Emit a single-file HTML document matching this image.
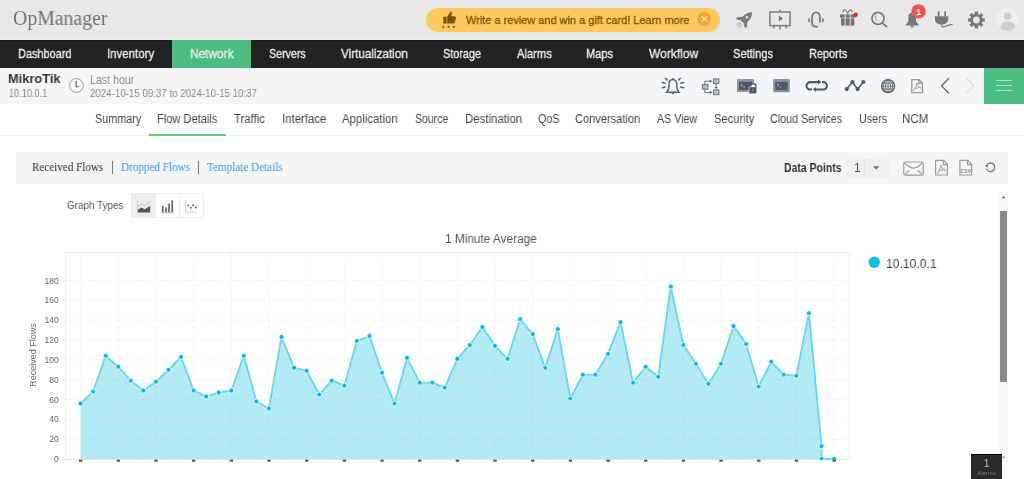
<!DOCTYPE html>
<html><head><meta charset="utf-8">
<style>
html,body{margin:0;padding:0;width:1024px;height:479px;overflow:hidden;background:#fff;font-family:"Liberation Sans",sans-serif;}
.t{position:absolute;white-space:nowrap;transform-origin:0 50%;will-change:transform;}
.b{position:absolute;}
svg{overflow:visible}
</style></head><body>
<!-- header -->
<div class=b style="left:0;top:0;width:1024px;height:40px;background:#e7e8e9"></div>
<div class=b style="left:0;top:38px;width:1024px;height:2px;background:#ebebec"></div>
<div class=b style="left:425.7px;top:8px;width:294.2px;height:24px;border-radius:12px;background:#fdc95f"></div>
<div class=b style="left:697.3px;top:12px;width:14px;height:14px;border-radius:7px;background:#e9a92c"></div>
<!-- nav -->
<div class=b style="left:0;top:40px;width:1024px;height:28px;background:#232323;border-top:1px solid #1c1c1c;box-sizing:border-box"></div>
<div class=b style="left:172.3px;top:40px;width:78.8px;height:28px;background:#4cbd7f"></div>
<!-- sub header -->
<div class=b style="left:0;top:68px;width:1024px;height:36px;background:#f4f5f7"></div>
<div class=b style="left:984px;top:68px;width:40px;height:35.5px;background:#4cbe7f"></div>
<div class=b style="left:996px;top:80.4px;width:16px;height:1px;background:#b0e3c6"></div>
<div class=b style="left:996px;top:85.2px;width:16px;height:1px;background:#b0e3c6"></div>
<div class=b style="left:996px;top:89.9px;width:16px;height:1px;background:#b0e3c6"></div>
<!-- tabs -->
<div class=b style="left:0;top:135px;width:1024px;height:1px;background:#efefef"></div>
<div class=b style="left:149.3px;top:134px;width:76.8px;height:2px;background:#5ccf7c"></div>
<!-- received flows bar -->
<div class=b style="left:16px;top:152px;width:992px;height:32px;background:#f4f5f7"></div>
<div class=b style="left:112px;top:161px;width:1px;height:13px;background:#777"></div>
<div class=b style="left:198px;top:161px;width:1px;height:13px;background:#777"></div>
<div class=b style="left:846px;top:158.5px;width:42.5px;height:19px;background:#eeeff0;border:0;"></div>
<div class=b style="left:864px;top:158.5px;width:1px;height:19px;background:#e2e3e4"></div>
<!-- graph types -->
<div class=b style="left:131px;top:193.4px;width:72.5px;height:24.8px;border:1px solid #efefef;box-sizing:border-box"></div>
<div class=b style="left:131px;top:193.4px;width:25px;height:24.8px;background:#ececec"></div>
<div class=b style="left:179px;top:193.4px;width:1px;height:24.8px;background:#efefef"></div>
<!-- scrollbar -->
<div class=b style="left:999px;top:192px;width:9px;height:270px;background:#f9f9f9"></div>
<div class=b style="left:1000px;top:210.5px;width:7px;height:171px;background:#8a8a8a"></div>
<!-- alarms box -->
<div class=b style="left:971px;top:454px;width:31px;height:25px;background:#2a2a2a;border-top:1px solid #000;box-sizing:border-box"></div>
<div class=t style="left:971px;top:457px;width:31px;text-align:center;font-size:11px;line-height:12px;color:#bbb">1</div>
<div class=t style="left:971px;top:470px;width:31px;text-align:center;font-size:6px;line-height:7px;color:#777">Alarms</div>
<svg width="1024" height="479" style="position:absolute;left:0;top:0">
<rect x="65.5" y="252.5" width="783.5" height="206.5" fill="none" stroke="#efefef" stroke-width="1"/>
<text x="58.8" y="462.10" text-anchor="end" font-family="Liberation Sans, sans-serif" font-size="8.6" fill="#666">0</text>
<text x="58.8" y="442.27" text-anchor="end" font-family="Liberation Sans, sans-serif" font-size="8.6" fill="#666">20</text>
<text x="58.8" y="422.43" text-anchor="end" font-family="Liberation Sans, sans-serif" font-size="8.6" fill="#666">40</text>
<text x="58.8" y="402.60" text-anchor="end" font-family="Liberation Sans, sans-serif" font-size="8.6" fill="#666">60</text>
<text x="58.8" y="382.76" text-anchor="end" font-family="Liberation Sans, sans-serif" font-size="8.6" fill="#666">80</text>
<text x="58.8" y="362.93" text-anchor="end" font-family="Liberation Sans, sans-serif" font-size="8.6" fill="#666">100</text>
<text x="58.8" y="343.10" text-anchor="end" font-family="Liberation Sans, sans-serif" font-size="8.6" fill="#666">120</text>
<text x="58.8" y="323.26" text-anchor="end" font-family="Liberation Sans, sans-serif" font-size="8.6" fill="#666">140</text>
<text x="58.8" y="303.43" text-anchor="end" font-family="Liberation Sans, sans-serif" font-size="8.6" fill="#666">160</text>
<text x="58.8" y="283.59" text-anchor="end" font-family="Liberation Sans, sans-serif" font-size="8.6" fill="#666">180</text>
<polygon points="80.60,459.0 80.60,403.46 93.16,391.56 105.71,355.86 118.27,366.77 130.83,380.66 143.38,390.57 155.94,381.65 168.50,369.75 181.06,356.85 193.61,390.57 206.17,396.52 218.73,392.56 231.28,390.57 243.84,355.86 256.40,401.48 268.96,408.42 281.51,337.02 294.07,367.76 306.63,370.74 319.18,394.54 331.74,380.66 344.30,385.61 356.85,340.99 369.41,336.03 381.97,372.72 394.52,403.46 407.08,357.85 419.64,382.64 432.20,382.64 444.75,387.60 457.31,358.84 469.87,344.95 482.42,327.10 494.98,345.95 507.54,358.84 520.10,319.17 532.65,334.05 545.21,367.76 557.77,329.09 570.32,398.51 582.88,374.71 595.44,374.71 607.99,353.88 620.55,322.15 633.11,382.64 645.67,366.77 658.22,376.69 670.78,286.44 683.34,344.95 695.89,363.80 708.45,383.63 721.01,363.80 733.56,326.11 746.12,343.96 758.68,386.61 771.24,361.81 783.79,374.71 796.35,375.70 808.91,313.22 821.46,446.11 821.46,459.0" fill="#b3ebf5"/>
<line x1="63" x2="849" y1="459.00" y2="459.00" stroke="#999" stroke-opacity="0.1" stroke-width="1" stroke-dasharray="4,2"/>
<line x1="63" x2="849" y1="439.17" y2="439.17" stroke="#999" stroke-opacity="0.1" stroke-width="1" stroke-dasharray="4,2"/>
<line x1="63" x2="849" y1="419.33" y2="419.33" stroke="#999" stroke-opacity="0.1" stroke-width="1" stroke-dasharray="4,2"/>
<line x1="63" x2="849" y1="399.50" y2="399.50" stroke="#999" stroke-opacity="0.1" stroke-width="1" stroke-dasharray="4,2"/>
<line x1="63" x2="849" y1="379.66" y2="379.66" stroke="#999" stroke-opacity="0.1" stroke-width="1" stroke-dasharray="4,2"/>
<line x1="63" x2="849" y1="359.83" y2="359.83" stroke="#999" stroke-opacity="0.1" stroke-width="1" stroke-dasharray="4,2"/>
<line x1="63" x2="849" y1="340.00" y2="340.00" stroke="#999" stroke-opacity="0.1" stroke-width="1" stroke-dasharray="4,2"/>
<line x1="63" x2="849" y1="320.16" y2="320.16" stroke="#999" stroke-opacity="0.1" stroke-width="1" stroke-dasharray="4,2"/>
<line x1="63" x2="849" y1="300.33" y2="300.33" stroke="#999" stroke-opacity="0.1" stroke-width="1" stroke-dasharray="4,2"/>
<line x1="63" x2="849" y1="280.49" y2="280.49" stroke="#999" stroke-opacity="0.1" stroke-width="1" stroke-dasharray="4,2"/>
<line x1="80.60" x2="80.60" y1="252.5" y2="459" stroke="#999" stroke-opacity="0.1" stroke-width="1" stroke-dasharray="4,2"/>
<line x1="118.27" x2="118.27" y1="252.5" y2="459" stroke="#999" stroke-opacity="0.1" stroke-width="1" stroke-dasharray="4,2"/>
<line x1="155.94" x2="155.94" y1="252.5" y2="459" stroke="#999" stroke-opacity="0.1" stroke-width="1" stroke-dasharray="4,2"/>
<line x1="193.61" x2="193.61" y1="252.5" y2="459" stroke="#999" stroke-opacity="0.1" stroke-width="1" stroke-dasharray="4,2"/>
<line x1="231.28" x2="231.28" y1="252.5" y2="459" stroke="#999" stroke-opacity="0.1" stroke-width="1" stroke-dasharray="4,2"/>
<line x1="268.96" x2="268.96" y1="252.5" y2="459" stroke="#999" stroke-opacity="0.1" stroke-width="1" stroke-dasharray="4,2"/>
<line x1="306.63" x2="306.63" y1="252.5" y2="459" stroke="#999" stroke-opacity="0.1" stroke-width="1" stroke-dasharray="4,2"/>
<line x1="344.30" x2="344.30" y1="252.5" y2="459" stroke="#999" stroke-opacity="0.1" stroke-width="1" stroke-dasharray="4,2"/>
<line x1="381.97" x2="381.97" y1="252.5" y2="459" stroke="#999" stroke-opacity="0.1" stroke-width="1" stroke-dasharray="4,2"/>
<line x1="419.64" x2="419.64" y1="252.5" y2="459" stroke="#999" stroke-opacity="0.1" stroke-width="1" stroke-dasharray="4,2"/>
<line x1="457.31" x2="457.31" y1="252.5" y2="459" stroke="#999" stroke-opacity="0.1" stroke-width="1" stroke-dasharray="4,2"/>
<line x1="494.98" x2="494.98" y1="252.5" y2="459" stroke="#999" stroke-opacity="0.1" stroke-width="1" stroke-dasharray="4,2"/>
<line x1="532.65" x2="532.65" y1="252.5" y2="459" stroke="#999" stroke-opacity="0.1" stroke-width="1" stroke-dasharray="4,2"/>
<line x1="570.32" x2="570.32" y1="252.5" y2="459" stroke="#999" stroke-opacity="0.1" stroke-width="1" stroke-dasharray="4,2"/>
<line x1="607.99" x2="607.99" y1="252.5" y2="459" stroke="#999" stroke-opacity="0.1" stroke-width="1" stroke-dasharray="4,2"/>
<line x1="645.67" x2="645.67" y1="252.5" y2="459" stroke="#999" stroke-opacity="0.1" stroke-width="1" stroke-dasharray="4,2"/>
<line x1="683.34" x2="683.34" y1="252.5" y2="459" stroke="#999" stroke-opacity="0.1" stroke-width="1" stroke-dasharray="4,2"/>
<line x1="721.01" x2="721.01" y1="252.5" y2="459" stroke="#999" stroke-opacity="0.1" stroke-width="1" stroke-dasharray="4,2"/>
<line x1="758.68" x2="758.68" y1="252.5" y2="459" stroke="#999" stroke-opacity="0.1" stroke-width="1" stroke-dasharray="4,2"/>
<line x1="796.35" x2="796.35" y1="252.5" y2="459" stroke="#999" stroke-opacity="0.1" stroke-width="1" stroke-dasharray="4,2"/>
<line x1="834.02" x2="834.02" y1="252.5" y2="459" stroke="#999" stroke-opacity="0.1" stroke-width="1" stroke-dasharray="4,2"/>
<line x1="63" x2="849" y1="459.5" y2="459.5" stroke="#e6e6e6" stroke-width="1"/>
<polyline points="80.60,403.46 93.16,391.56 105.71,355.86 118.27,366.77 130.83,380.66 143.38,390.57 155.94,381.65 168.50,369.75 181.06,356.85 193.61,390.57 206.17,396.52 218.73,392.56 231.28,390.57 243.84,355.86 256.40,401.48 268.96,408.42 281.51,337.02 294.07,367.76 306.63,370.74 319.18,394.54 331.74,380.66 344.30,385.61 356.85,340.99 369.41,336.03 381.97,372.72 394.52,403.46 407.08,357.85 419.64,382.64 432.20,382.64 444.75,387.60 457.31,358.84 469.87,344.95 482.42,327.10 494.98,345.95 507.54,358.84 520.10,319.17 532.65,334.05 545.21,367.76 557.77,329.09 570.32,398.51 582.88,374.71 595.44,374.71 607.99,353.88 620.55,322.15 633.11,382.64 645.67,366.77 658.22,376.69 670.78,286.44 683.34,344.95 695.89,363.80 708.45,383.63 721.01,363.80 733.56,326.11 746.12,343.96 758.68,386.61 771.24,361.81 783.79,374.71 796.35,375.70 808.91,313.22 821.46,446.11 821.46,459.0 834.02,459.0" fill="none" stroke="#66d5ee" stroke-width="1.8" stroke-linejoin="round"/>
<clipPath id="pc"><rect x="60" y="240" width="800" height="219.8"/></clipPath><g clip-path="url(#pc)">
<circle cx="80.60" cy="403.46" r="2.5" fill="#00bde0" stroke="#fff" stroke-width="0.8"/>
<circle cx="93.16" cy="391.56" r="2.5" fill="#00bde0" stroke="#fff" stroke-width="0.8"/>
<circle cx="105.71" cy="355.86" r="2.5" fill="#00bde0" stroke="#fff" stroke-width="0.8"/>
<circle cx="118.27" cy="366.77" r="2.5" fill="#00bde0" stroke="#fff" stroke-width="0.8"/>
<circle cx="130.83" cy="380.66" r="2.5" fill="#00bde0" stroke="#fff" stroke-width="0.8"/>
<circle cx="143.38" cy="390.57" r="2.5" fill="#00bde0" stroke="#fff" stroke-width="0.8"/>
<circle cx="155.94" cy="381.65" r="2.5" fill="#00bde0" stroke="#fff" stroke-width="0.8"/>
<circle cx="168.50" cy="369.75" r="2.5" fill="#00bde0" stroke="#fff" stroke-width="0.8"/>
<circle cx="181.06" cy="356.85" r="2.5" fill="#00bde0" stroke="#fff" stroke-width="0.8"/>
<circle cx="193.61" cy="390.57" r="2.5" fill="#00bde0" stroke="#fff" stroke-width="0.8"/>
<circle cx="206.17" cy="396.52" r="2.5" fill="#00bde0" stroke="#fff" stroke-width="0.8"/>
<circle cx="218.73" cy="392.56" r="2.5" fill="#00bde0" stroke="#fff" stroke-width="0.8"/>
<circle cx="231.28" cy="390.57" r="2.5" fill="#00bde0" stroke="#fff" stroke-width="0.8"/>
<circle cx="243.84" cy="355.86" r="2.5" fill="#00bde0" stroke="#fff" stroke-width="0.8"/>
<circle cx="256.40" cy="401.48" r="2.5" fill="#00bde0" stroke="#fff" stroke-width="0.8"/>
<circle cx="268.96" cy="408.42" r="2.5" fill="#00bde0" stroke="#fff" stroke-width="0.8"/>
<circle cx="281.51" cy="337.02" r="2.5" fill="#00bde0" stroke="#fff" stroke-width="0.8"/>
<circle cx="294.07" cy="367.76" r="2.5" fill="#00bde0" stroke="#fff" stroke-width="0.8"/>
<circle cx="306.63" cy="370.74" r="2.5" fill="#00bde0" stroke="#fff" stroke-width="0.8"/>
<circle cx="319.18" cy="394.54" r="2.5" fill="#00bde0" stroke="#fff" stroke-width="0.8"/>
<circle cx="331.74" cy="380.66" r="2.5" fill="#00bde0" stroke="#fff" stroke-width="0.8"/>
<circle cx="344.30" cy="385.61" r="2.5" fill="#00bde0" stroke="#fff" stroke-width="0.8"/>
<circle cx="356.85" cy="340.99" r="2.5" fill="#00bde0" stroke="#fff" stroke-width="0.8"/>
<circle cx="369.41" cy="336.03" r="2.5" fill="#00bde0" stroke="#fff" stroke-width="0.8"/>
<circle cx="381.97" cy="372.72" r="2.5" fill="#00bde0" stroke="#fff" stroke-width="0.8"/>
<circle cx="394.52" cy="403.46" r="2.5" fill="#00bde0" stroke="#fff" stroke-width="0.8"/>
<circle cx="407.08" cy="357.85" r="2.5" fill="#00bde0" stroke="#fff" stroke-width="0.8"/>
<circle cx="419.64" cy="382.64" r="2.5" fill="#00bde0" stroke="#fff" stroke-width="0.8"/>
<circle cx="432.20" cy="382.64" r="2.5" fill="#00bde0" stroke="#fff" stroke-width="0.8"/>
<circle cx="444.75" cy="387.60" r="2.5" fill="#00bde0" stroke="#fff" stroke-width="0.8"/>
<circle cx="457.31" cy="358.84" r="2.5" fill="#00bde0" stroke="#fff" stroke-width="0.8"/>
<circle cx="469.87" cy="344.95" r="2.5" fill="#00bde0" stroke="#fff" stroke-width="0.8"/>
<circle cx="482.42" cy="327.10" r="2.5" fill="#00bde0" stroke="#fff" stroke-width="0.8"/>
<circle cx="494.98" cy="345.95" r="2.5" fill="#00bde0" stroke="#fff" stroke-width="0.8"/>
<circle cx="507.54" cy="358.84" r="2.5" fill="#00bde0" stroke="#fff" stroke-width="0.8"/>
<circle cx="520.10" cy="319.17" r="2.5" fill="#00bde0" stroke="#fff" stroke-width="0.8"/>
<circle cx="532.65" cy="334.05" r="2.5" fill="#00bde0" stroke="#fff" stroke-width="0.8"/>
<circle cx="545.21" cy="367.76" r="2.5" fill="#00bde0" stroke="#fff" stroke-width="0.8"/>
<circle cx="557.77" cy="329.09" r="2.5" fill="#00bde0" stroke="#fff" stroke-width="0.8"/>
<circle cx="570.32" cy="398.51" r="2.5" fill="#00bde0" stroke="#fff" stroke-width="0.8"/>
<circle cx="582.88" cy="374.71" r="2.5" fill="#00bde0" stroke="#fff" stroke-width="0.8"/>
<circle cx="595.44" cy="374.71" r="2.5" fill="#00bde0" stroke="#fff" stroke-width="0.8"/>
<circle cx="607.99" cy="353.88" r="2.5" fill="#00bde0" stroke="#fff" stroke-width="0.8"/>
<circle cx="620.55" cy="322.15" r="2.5" fill="#00bde0" stroke="#fff" stroke-width="0.8"/>
<circle cx="633.11" cy="382.64" r="2.5" fill="#00bde0" stroke="#fff" stroke-width="0.8"/>
<circle cx="645.67" cy="366.77" r="2.5" fill="#00bde0" stroke="#fff" stroke-width="0.8"/>
<circle cx="658.22" cy="376.69" r="2.5" fill="#00bde0" stroke="#fff" stroke-width="0.8"/>
<circle cx="670.78" cy="286.44" r="2.5" fill="#00bde0" stroke="#fff" stroke-width="0.8"/>
<circle cx="683.34" cy="344.95" r="2.5" fill="#00bde0" stroke="#fff" stroke-width="0.8"/>
<circle cx="695.89" cy="363.80" r="2.5" fill="#00bde0" stroke="#fff" stroke-width="0.8"/>
<circle cx="708.45" cy="383.63" r="2.5" fill="#00bde0" stroke="#fff" stroke-width="0.8"/>
<circle cx="721.01" cy="363.80" r="2.5" fill="#00bde0" stroke="#fff" stroke-width="0.8"/>
<circle cx="733.56" cy="326.11" r="2.5" fill="#00bde0" stroke="#fff" stroke-width="0.8"/>
<circle cx="746.12" cy="343.96" r="2.5" fill="#00bde0" stroke="#fff" stroke-width="0.8"/>
<circle cx="758.68" cy="386.61" r="2.5" fill="#00bde0" stroke="#fff" stroke-width="0.8"/>
<circle cx="771.24" cy="361.81" r="2.5" fill="#00bde0" stroke="#fff" stroke-width="0.8"/>
<circle cx="783.79" cy="374.71" r="2.5" fill="#00bde0" stroke="#fff" stroke-width="0.8"/>
<circle cx="796.35" cy="375.70" r="2.5" fill="#00bde0" stroke="#fff" stroke-width="0.8"/>
<circle cx="808.91" cy="313.22" r="2.5" fill="#00bde0" stroke="#fff" stroke-width="0.8"/>
<circle cx="821.46" cy="446.11" r="2.5" fill="#00bde0" stroke="#fff" stroke-width="0.8"/>
<circle cx="834.02" cy="459.00" r="2.5" fill="#00bde0" stroke="#fff" stroke-width="0.8"/>
<circle cx="821.46" cy="459.00" r="2.5" fill="#00bde0" stroke="#fff" stroke-width="0.8"/>
</g>
<rect x="79.00" y="459.7" width="3.4" height="2" fill="#555"/>
<rect x="116.67" y="459.7" width="3.4" height="2" fill="#555"/>
<rect x="154.34" y="459.7" width="3.4" height="2" fill="#555"/>
<rect x="192.01" y="459.7" width="3.4" height="2" fill="#555"/>
<rect x="229.68" y="459.7" width="3.4" height="2" fill="#555"/>
<rect x="267.36" y="459.7" width="3.4" height="2" fill="#555"/>
<rect x="305.03" y="459.7" width="3.4" height="2" fill="#555"/>
<rect x="342.70" y="459.7" width="3.4" height="2" fill="#555"/>
<rect x="380.37" y="459.7" width="3.4" height="2" fill="#555"/>
<rect x="418.04" y="459.7" width="3.4" height="2" fill="#555"/>
<rect x="455.71" y="459.7" width="3.4" height="2" fill="#555"/>
<rect x="493.38" y="459.7" width="3.4" height="2" fill="#555"/>
<rect x="531.05" y="459.7" width="3.4" height="2" fill="#555"/>
<rect x="568.72" y="459.7" width="3.4" height="2" fill="#555"/>
<rect x="606.39" y="459.7" width="3.4" height="2" fill="#555"/>
<rect x="644.07" y="459.7" width="3.4" height="2" fill="#555"/>
<rect x="681.74" y="459.7" width="3.4" height="2" fill="#555"/>
<rect x="719.41" y="459.7" width="3.4" height="2" fill="#555"/>
<rect x="757.08" y="459.7" width="3.4" height="2" fill="#555"/>
<rect x="794.75" y="459.7" width="3.4" height="2" fill="#555"/>
<rect x="832.42" y="459.7" width="3.4" height="2" fill="#555"/>
<text transform="translate(35.5,355) rotate(-90)" text-anchor="middle" font-family="Liberation Sans, sans-serif" font-size="9" fill="#666">Received Flows</text>
<circle cx="874.2" cy="262.2" r="5.6" fill="#00c2e3"/>
</svg>
<svg width="1024" height="479" style="position:absolute;left:0;top:0">
<!-- thumbs up w stars -->
<g fill="#7a5300">
<path d="M443.4,16.6 h3.2 v7 h-3.2 z"/>
<path d="M447.2,16.8 l2.2,-3.2 c0.4,-0.7 0.5,-1.4 0.6,-2 c1.6,-0.2 2.2,1 1.8,2.6 l-0.5,2 h3.2 c1,0 1.6,0.8 1.4,1.7 l-1.1,4.6 c-0.2,0.7 -0.8,1.1 -1.5,1.1 h-6.1 z"/>
<path id="st" d="M443.3,25.4 l0.45,0.95 l1,0.12 l-0.74,0.7 l0.2,1 l-0.91,-0.5 l-0.91,0.5 l0.2,-1 l-0.74,-0.7 l1,-0.12 z"/>
<use href="#st" transform="translate(5.3,0)"/><use href="#st" transform="translate(10.6,0)"/>
</g>
<!-- close circle X -->
<path d="M701.6,16.3 l5.4,5.4 M707,16.3 l-5.4,5.4" stroke="#fde7b5" stroke-width="1.2"/>
<!-- rocket -->
<g transform="translate(744.6,19.6) rotate(45)" fill="#787878">
<path d="M0,-10.5 C3.6,-7.5 4,-2.5 3.4,3.2 L-3.4,3.2 C-4,-2.5 -3.6,-7.5 0,-10.5 Z"/>
<path d="M-3.2,-0.8 L-6.8,3.6 L-6.6,5.6 L-3.2,4.2 Z M3.2,-0.8 L6.8,3.6 L6.6,5.6 L3.2,4.2 Z"/>
<circle cx="0" cy="-3.2" r="1.4" fill="#e7e8e9"/>
</g>
<g transform="translate(744.6,19.6) rotate(45)" stroke="#8a8a8a" stroke-width="0.8">
<path d="M-1.8,5 v4.2 M0,5 v5.2 M1.8,5 v4.2"/>
</g>
<!-- presentation -->
<g stroke="#787878" fill="none" stroke-width="1.5">
<rect x="769.9" y="12" width="20.2" height="13.6"/>
<path d="M780,9.4 v2.6 M780,25.6 v3.8 M774.5,25.8 l-1.2,2.4 M785.5,25.8 l1.2,2.4"/>
</g>
<path d="M778.8,15.4 l4.3,3 l-4.3,3 z" fill="#787878"/>
<!-- headset -->
<g stroke="#787878" fill="none" stroke-width="1.7">
<path d="M812,23 v-5.5 c0,-3.2 1.8,-5.2 4,-5.2 c2.2,0 4,2 4,5.2 v5.2"/>
<path d="M812,22.5 c0,3 1.6,4.2 4.5,4.3"/>
</g>
<g fill="#787878">
<rect x="808.3" y="18.3" width="1.6" height="4" rx="0.7"/>
<rect x="822.1" y="18.3" width="1.6" height="4" rx="0.7"/>
<circle cx="817" cy="26.8" r="1"/>
</g>
<!-- gift -->
<g fill="#787878">
<rect x="840" y="14.3" width="15.3" height="3.4"/>
<rect x="841" y="18.3" width="13.3" height="7.3"/>
</g>
<path d="M845.1,14 v11.8 M850.2,14 v11.8" stroke="#e7e8e9" stroke-width="0.9"/>
<path d="M847.6,13.6 c-0.6,-2 -2.6,-4.6 -4,-3.6 c-0.8,0.7 -0.4,2.2 0.6,2 M847.6,13.6 c0.6,-2 2.6,-4.6 4,-3.6 c0.8,0.7 0.4,2.2 -0.6,2" stroke="#787878" stroke-width="1.1" fill="none"/>
<circle cx="855.6" cy="14.7" r="2.3" fill="#f0282f"/>
<!-- search -->
<g stroke="#787878" fill="none" stroke-width="1.6">
<circle cx="878" cy="18.4" r="6"/>
<path d="M882.4,22.8 l4.6,4.4"/>
</g>
<path d="M877,14.8 c-2,0.8 -2.2,4.6 -0.2,5.8" stroke="#999" stroke-width="0.9" fill="none"/>
<!-- bell -->
<g fill="#787878">
<path d="M912.2,12.6 c-2.6,0 -3.8,2.2 -3.8,4.6 v4.2 l-2.7,3.3 v0.7 h13 v-0.7 l-2.7,-3.3 v-4.2 c0,-2.4 -1.2,-4.6 -3.8,-4.6 z"/>
<rect x="910.8" y="25.6" width="2.8" height="1.8"/>
</g>
<circle cx="918.6" cy="11.4" r="7.2" fill="#f25354"/>
<text x="918.7" y="14.6" text-anchor="middle" font-family="Liberation Sans, sans-serif" font-weight="bold" font-size="9" fill="#fff">1</text>
<!-- plug -->
<g fill="#787878">
<rect x="937.8" y="11.4" width="1.7" height="5"/><rect x="944.3" y="11.4" width="1.7" height="5"/>
<path d="M935,16.2 h13.2 v3.3 c0,3 -2.5,4.8 -5.2,5 h-2.8 c-2.7,-0.2 -5.2,-2 -5.2,-5 z"/>
</g>
<path d="M941.5,24.5 c0,2.5 1.5,2.8 3.2,2.2 c2,-0.7 4.5,-2.4 7.8,-2" stroke="#787878" stroke-width="1.2" fill="none"/>
<!-- gear -->
<g fill="#787878" transform="translate(976.4,20)">
<g id="teeth"><rect x="-1.6" y="-8.4" width="3.2" height="3.4"/></g>
<use href="#teeth" transform="rotate(45)"/><use href="#teeth" transform="rotate(90)"/><use href="#teeth" transform="rotate(135)"/><use href="#teeth" transform="rotate(180)"/><use href="#teeth" transform="rotate(225)"/><use href="#teeth" transform="rotate(270)"/><use href="#teeth" transform="rotate(315)"/>
<circle r="6.2"/>
</g>
<circle cx="976.4" cy="20" r="3.4" fill="#e7e8e9"/>
<!-- avatar -->
<circle cx="1007.7" cy="19.6" r="11.3" fill="#efefef"/>
<clipPath id="av"><circle cx="1007.7" cy="19.6" r="11.3"/></clipPath>
<g fill="#cfcfcf" clip-path="url(#av)">
<circle cx="1007.7" cy="16.3" r="3.7"/>
<ellipse cx="1007.9" cy="28" rx="7.8" ry="6.8"/>
</g>

<!-- clock -->
<circle cx="76.4" cy="85.5" r="6.9" stroke="#9a9a9a" stroke-width="1" fill="none"/>
<path d="M76.2,81 v5.6 h2.4" stroke="#707070" stroke-width="1.3" fill="none"/>

<!-- alarm bell with rays -->
<g stroke="#59616d" stroke-width="1.5" fill="none" stroke-linecap="round">
<path d="M666.7,92.2 h12.2 c-1.6,-1.6 -2.1,-3.4 -2.1,-6 v-2.2 c0,-2.6 -1.6,-4.6 -3.9,-4.6 c-2.3,0 -3.9,2 -3.9,4.6 v2.2 c0,2.6 -0.7,4.4 -2.3,6 z"/>
<path d="M665.5,78.3 l1.6,1.6 M662.2,82.6 l2.8,0.6 M662.3,87.8 l2.8,-0.7 M680.3,78.3 l-1.6,1.6 M683.6,82.6 l-2.8,0.6 M683.5,87.8 l-2.8,-0.7"/>
</g>
<circle cx="672.9" cy="78.8" r="0.9" fill="#59616d"/>
<path d="M671.4,93 h3 l-1.5,1.5 z" fill="#59616d"/>
<!-- workflow -->
<g stroke="#6b7380" stroke-width="1" fill="#b9bec6">
<rect x="702.3" y="84.6" width="5.6" height="4.6"/>
<rect x="713.5" y="78.9" width="5.4" height="4.6"/>
<rect x="713.5" y="89.9" width="5.4" height="4.8"/>
</g>
<path d="M704.8,84.5 v-3.3 h5.2 M704.8,89.3 v3.2 h5.2 M716.2,83.7 v4.2" stroke="#6b7380" stroke-width="1" fill="none"/>
<path d="M709.8,79.7 l2.5,1.5 l-2.5,1.5 z M709.8,91 l2.5,1.5 l-2.5,1.5 z M714.8,87 l1.4,2.2 l1.4,-2.2 z" fill="#4f5866"/>
<!-- terminal lock -->
<rect x="737" y="79" width="16.9" height="12.9" rx="1" fill="#8e949c"/>
<rect x="739" y="81.8" width="13" height="8.2" fill="#4f5866"/>
<path d="M740.8,83.6 l1.6,1.4 l-1.6,1.4" stroke="#c9ced4" stroke-width="0.9" fill="none"/>
<path d="M743,87 h2" stroke="#c9ced4" stroke-width="0.8"/>
<path d="M750.6,87.4 v-1.2 c0,-1.5 1.2,-2.5 2.6,-2.5 c1.4,0 2.6,1 2.6,2.5 v1.2" stroke="#4f5866" stroke-width="1.5" fill="#fff"/>
<rect x="748.9" y="86.8" width="7.9" height="7" rx="0.8" fill="#4f5866" stroke="#f4f5f7" stroke-width="0.6"/>
<rect x="752.5" y="89.6" width="0.9" height="1.6" fill="#aab"/>
<!-- terminal -->
<rect x="773.2" y="79" width="16.6" height="13.2" rx="1" fill="#8e949c"/>
<rect x="775.3" y="81.9" width="12.4" height="8.2" fill="#4f5866"/>
<path d="M777.2,83.6 l1.6,1.4 l-1.6,1.4" stroke="#c9ced4" stroke-width="0.9" fill="none"/>
<path d="M779.4,87.2 h2" stroke="#c9ced4" stroke-width="0.8"/>
<!-- loop -->
<g stroke="#4f5866" stroke-width="2.1" fill="none">
<path d="M819,82.1 h-8.8 a3.7,3.7 0 0 0 0,7.4 h1.8"/>
<path d="M815,89.5 h8.2 a3.7,3.7 0 0 0 0,-7.4 h-1.2"/>
</g>
<path d="M818.2,79.6 l3.2,2.5 l-3.2,2.5 z M816.1,87 l-3.2,2.5 l3.2,2.5 z" fill="#4f5866"/>
<!-- line chart -->
<path d="M846.8,89.1 L852.5,82 L857.6,89.1 L863.4,82" stroke="#4f5866" stroke-width="1.6" fill="none"/>
<g fill="#4f5866"><circle cx="846.8" cy="89.1" r="2.1"/><circle cx="852.5" cy="82" r="2.1"/><circle cx="857.6" cy="89.1" r="2.1"/><circle cx="863.4" cy="82" r="2.1"/></g>
<!-- globe -->
<circle cx="888.1" cy="86.1" r="6.5" fill="#f4f5f7" stroke="#56606e" stroke-width="1.3"/>
<g stroke="#56606e" stroke-width="0.8" fill="none">
<path d="M882,83.2 h12.2 M881.8,86.1 h12.6 M882,89 h12.2"/>
<path d="M888.1,79.7 v12.8"/>
<ellipse cx="888.1" cy="86.1" rx="2.4" ry="6.4"/>
<ellipse cx="888.1" cy="86.1" rx="4.6" ry="6.4"/>
</g>
<!-- pdf header -->
<g stroke="#999" stroke-width="1.3" fill="none">
<path d="M911.8,79.6 h7.3 l3.4,3.4 v9.6 h-10.7 z M918.7,79.6 v3.8 h3.8"/>
<path d="M913.6,91 c1.4,-1.6 3,-5.2 3.4,-8 c0.8,3 2.4,4.6 4.6,5.4 M914.8,88.6 l5.8,-1.4" stroke-width="0.9"/>
</g>
<!-- chevrons -->
<path d="M949,78.2 l-7.4,7.6 l7.4,7.5" stroke="#555" stroke-width="1.2" fill="none"/>
<path d="M966.4,78.2 l7.4,7.6 l-7.4,7.5" stroke="#ddd" stroke-width="1.2" fill="none"/>

<!-- select arrow -->
<path d="M873,166.2 h6.4 l-3.2,3.6 z" fill="#777"/>
<!-- mail -->
<g stroke="#9a9a9a" stroke-width="1.2" fill="none">
<rect x="903.8" y="162" width="19.4" height="13.2" rx="1.6"/>
<path d="M904.8,163.2 c3,3 5.6,5 8.7,5 c3.1,0 5.7,-2 8.7,-5 M905.6,173.8 l3.6,-3.4 M921.4,173.8 l-3.6,-3.4"/>
</g>
<!-- pdf -->
<g stroke="#9a9a9a" stroke-width="1.2" fill="none">
<path d="M935.6,160.4 h8 l3.8,3.8 v10.8 h-11.8 z M943.3,160.4 v4.2 h4.1"/>
<path d="M937.2,173.5 c1.6,-1.8 3.4,-5.4 3.8,-8.4 c0.8,3.2 2.6,5 5,5.8 M938.6,170.8 l6.4,-1.6" stroke-width="1"/>
</g>
<!-- csv -->
<g stroke="#9a9a9a" stroke-width="1.2" fill="none">
<path d="M959.9,160.4 h8 l3.8,3.8 v10.8 h-11.8 z M967.6,160.4 v4.2 h4.1"/>
</g>
<text x="965.9" y="173.3" text-anchor="middle" font-family="Liberation Sans, sans-serif" font-weight="bold" font-size="5.2" fill="#888">CSV</text>
<!-- refresh -->
<path d="M986.4,168.6 A4.3,4.3 0 1 0 987.4,164.3" stroke="#7a7a7a" stroke-width="1.3" fill="none"/>
<path d="M984.6,165.2 l3.6,-0.9 l-0.6,3.4 z" fill="#7a7a7a"/>
<!-- graph types icons -->
<path d="M137.5,200.4 v12" stroke="#ccc" stroke-width="0.9"/>
<path d="M137.8,207 l3.8,-3.2 l3.2,2.2 l5.4,-4.6" stroke="#bbb" stroke-width="0.9" fill="none"/>
<path d="M137.8,212.6 v-2.8 l3.6,-2.2 l3.2,1.6 l5.6,-3.2 v6.6 z" fill="#555"/>
<g fill="#666">
<rect x="161.9" y="206" width="1.7" height="6.4"/><rect x="165.2" y="207.3" width="1.7" height="5.1"/><rect x="168.2" y="203.5" width="1.7" height="8.9"/><rect x="171.4" y="200.4" width="1.7" height="12"/>
</g>
<path d="M161,212.6 h13" stroke="#aaa" stroke-width="0.8"/>
<path d="M185.7,200.4 v11.8 h11.2" stroke="#ccc" stroke-width="0.9" fill="none"/>
<g fill="#666"><circle cx="188.2" cy="205.5" r="1"/><circle cx="190.8" cy="207.8" r="1"/><circle cx="193.2" cy="205.3" r="1"/><circle cx="195.8" cy="207.6" r="1"/></g>

<!-- scrollbar arrows -->
<path d="M1001.6,198.2 h4 l-2,-2.2 z" fill="#666"/>
<path d="M1001.6,456.5 h4 l-2,2.2 z" fill="#aaa"/>
</svg>

<div class=t style="left:12.70px;top:8.45px;font-family:'Liberation Serif', serif;font-size:20px;line-height:20px;font-weight:normal;color:#727272;transform:scaleX(0.9892);">OpManager</div>
<div class=t style="left:466.40px;top:14.77px;font-family:'Liberation Sans', sans-serif;font-size:11.5px;line-height:11.5px;font-weight:normal;color:#7a5200;transform:scaleX(0.9532);-webkit-text-stroke:0.3px #7a5200;">Write a review and win a gift card! Learn more</div>
<div class=t style="left:17.60px;top:46.80px;font-family:'Liberation Sans', sans-serif;font-size:13px;line-height:13px;font-weight:normal;color:#ececec;transform:scaleX(0.8426);-webkit-text-stroke:0.35px #ececec;">Dashboard</div>
<div class=t style="left:107.20px;top:46.80px;font-family:'Liberation Sans', sans-serif;font-size:13px;line-height:13px;font-weight:normal;color:#ececec;transform:scaleX(0.8825);-webkit-text-stroke:0.35px #ececec;">Inventory</div>
<div class=t style="left:189.90px;top:46.80px;font-family:'Liberation Sans', sans-serif;font-size:13px;line-height:13px;font-weight:normal;color:#ececec;transform:scaleX(0.9143);-webkit-text-stroke:0.35px #ececec;">Network</div>
<div class=t style="left:269.00px;top:46.80px;font-family:'Liberation Sans', sans-serif;font-size:13px;line-height:13px;font-weight:normal;color:#ececec;transform:scaleX(0.8193);-webkit-text-stroke:0.35px #ececec;">Servers</div>
<div class=t style="left:341.40px;top:46.80px;font-family:'Liberation Sans', sans-serif;font-size:13px;line-height:13px;font-weight:normal;color:#ececec;transform:scaleX(0.9002);-webkit-text-stroke:0.35px #ececec;">Virtualization</div>
<div class=t style="left:443.40px;top:46.80px;font-family:'Liberation Sans', sans-serif;font-size:13px;line-height:13px;font-weight:normal;color:#ececec;transform:scaleX(0.8365);-webkit-text-stroke:0.35px #ececec;">Storage</div>
<div class=t style="left:516.60px;top:46.80px;font-family:'Liberation Sans', sans-serif;font-size:13px;line-height:13px;font-weight:normal;color:#ececec;transform:scaleX(0.8627);-webkit-text-stroke:0.35px #ececec;">Alarms</div>
<div class=t style="left:586.40px;top:46.80px;font-family:'Liberation Sans', sans-serif;font-size:13px;line-height:13px;font-weight:normal;color:#ececec;transform:scaleX(0.8523);-webkit-text-stroke:0.35px #ececec;">Maps</div>
<div class=t style="left:648.90px;top:46.80px;font-family:'Liberation Sans', sans-serif;font-size:13px;line-height:13px;font-weight:normal;color:#ececec;transform:scaleX(0.9264);-webkit-text-stroke:0.35px #ececec;">Workflow</div>
<div class=t style="left:733.00px;top:46.80px;font-family:'Liberation Sans', sans-serif;font-size:13px;line-height:13px;font-weight:normal;color:#ececec;transform:scaleX(0.8513);-webkit-text-stroke:0.35px #ececec;">Settings</div>
<div class=t style="left:808.80px;top:46.80px;font-family:'Liberation Sans', sans-serif;font-size:13px;line-height:13px;font-weight:normal;color:#ececec;transform:scaleX(0.8412);-webkit-text-stroke:0.35px #ececec;">Reports</div>
<div class=t style="left:8.20px;top:72.17px;font-family:'Liberation Sans', sans-serif;font-size:13.5px;line-height:13.5px;font-weight:bold;color:#333;transform:scaleX(0.9500);">MikroTik</div>
<div class=t style="left:8.75px;top:88.19px;font-family:'Liberation Sans', sans-serif;font-size:11px;line-height:11px;font-weight:normal;color:#8a8a8a;transform:scaleX(0.8338);">10.10.0.1</div>
<div class=t style="left:90.20px;top:74.24px;font-family:'Liberation Sans', sans-serif;font-size:12px;line-height:12px;font-weight:normal;color:#8a8a8a;transform:scaleX(0.8852);">Last hour</div>
<div class=t style="left:90.00px;top:88.19px;font-family:'Liberation Sans', sans-serif;font-size:11px;line-height:11px;font-weight:normal;color:#8a8a8a;transform:scaleX(0.8836);">2024-10-15 09:37 to 2024-10-15 10:37</div>
<div class=t style="left:95.00px;top:113.32px;font-family:'Liberation Sans', sans-serif;font-size:12.5px;line-height:12.5px;font-weight:normal;color:#444;transform:scaleX(0.8675);">Summary</div>
<div class=t style="left:157.40px;top:113.32px;font-family:'Liberation Sans', sans-serif;font-size:12.5px;line-height:12.5px;font-weight:normal;color:#444;transform:scaleX(0.8872);">Flow Details</div>
<div class=t style="left:234.40px;top:113.32px;font-family:'Liberation Sans', sans-serif;font-size:12.5px;line-height:12.5px;font-weight:normal;color:#444;transform:scaleX(0.9076);">Traffic</div>
<div class=t style="left:281.50px;top:113.32px;font-family:'Liberation Sans', sans-serif;font-size:12.5px;line-height:12.5px;font-weight:normal;color:#444;transform:scaleX(0.9087);">Interface</div>
<div class=t style="left:342.30px;top:113.32px;font-family:'Liberation Sans', sans-serif;font-size:12.5px;line-height:12.5px;font-weight:normal;color:#444;transform:scaleX(0.9108);">Application</div>
<div class=t style="left:414.60px;top:113.32px;font-family:'Liberation Sans', sans-serif;font-size:12.5px;line-height:12.5px;font-weight:normal;color:#444;transform:scaleX(0.8382);">Source</div>
<div class=t style="left:464.50px;top:113.32px;font-family:'Liberation Sans', sans-serif;font-size:12.5px;line-height:12.5px;font-weight:normal;color:#444;transform:scaleX(0.9129);">Destination</div>
<div class=t style="left:537.70px;top:113.32px;font-family:'Liberation Sans', sans-serif;font-size:12.5px;line-height:12.5px;font-weight:normal;color:#444;transform:scaleX(0.8555);">QoS</div>
<div class=t style="left:575.20px;top:113.32px;font-family:'Liberation Sans', sans-serif;font-size:12.5px;line-height:12.5px;font-weight:normal;color:#444;transform:scaleX(0.8838);">Conversation</div>
<div class=t style="left:657.30px;top:113.32px;font-family:'Liberation Sans', sans-serif;font-size:12.5px;line-height:12.5px;font-weight:normal;color:#444;transform:scaleX(0.8529);">AS View</div>
<div class=t style="left:713.70px;top:113.32px;font-family:'Liberation Sans', sans-serif;font-size:12.5px;line-height:12.5px;font-weight:normal;color:#444;transform:scaleX(0.8925);">Security</div>
<div class=t style="left:770.00px;top:113.32px;font-family:'Liberation Sans', sans-serif;font-size:12.5px;line-height:12.5px;font-weight:normal;color:#444;transform:scaleX(0.8575);">Cloud Services</div>
<div class=t style="left:858.50px;top:113.32px;font-family:'Liberation Sans', sans-serif;font-size:12.5px;line-height:12.5px;font-weight:normal;color:#444;transform:scaleX(0.8574);">Users</div>
<div class=t style="left:902.40px;top:113.32px;font-family:'Liberation Sans', sans-serif;font-size:12.5px;line-height:12.5px;font-weight:normal;color:#444;transform:scaleX(0.9273);">NCM</div>
<div class=t style="left:32.20px;top:160.75px;font-family:'Liberation Serif', serif;font-size:12px;line-height:12px;font-weight:normal;color:#333;transform:scaleX(0.9247);">Received Flows</div>
<div class=t style="left:120.70px;top:160.75px;font-family:'Liberation Serif', serif;font-size:12px;line-height:12px;font-weight:normal;color:#3d9ae0;transform:scaleX(0.9268);">Dropped Flows</div>
<div class=t style="left:206.60px;top:160.75px;font-family:'Liberation Serif', serif;font-size:12px;line-height:12px;font-weight:normal;color:#3d9ae0;transform:scaleX(0.9280);">Template Details</div>
<div class=t style="left:784.40px;top:162.04px;font-family:'Liberation Sans', sans-serif;font-size:12px;line-height:12px;font-weight:bold;color:#333;transform:scaleX(0.8725);">Data Points</div>
<div class=t style="left:854.00px;top:161.84px;font-family:'Liberation Sans', sans-serif;font-size:12px;line-height:12px;font-weight:normal;color:#555;">1</div>
<div class=t style="left:66.60px;top:199.79px;font-family:'Liberation Sans', sans-serif;font-size:11px;line-height:11px;font-weight:normal;color:#555;transform:scaleX(0.8984);">Graph Types</div>
<div class=t style="left:445.30px;top:232.64px;font-family:'Liberation Sans', sans-serif;font-size:12px;line-height:12px;font-weight:normal;color:#555;transform:scaleX(0.9840);">1 Minute Average</div>
<div class=t style="left:885.60px;top:256.80px;font-family:'Liberation Sans', sans-serif;font-size:13px;line-height:13px;font-weight:normal;color:#444;transform:scaleX(0.9333);">10.10.0.1</div>
</body></html>
